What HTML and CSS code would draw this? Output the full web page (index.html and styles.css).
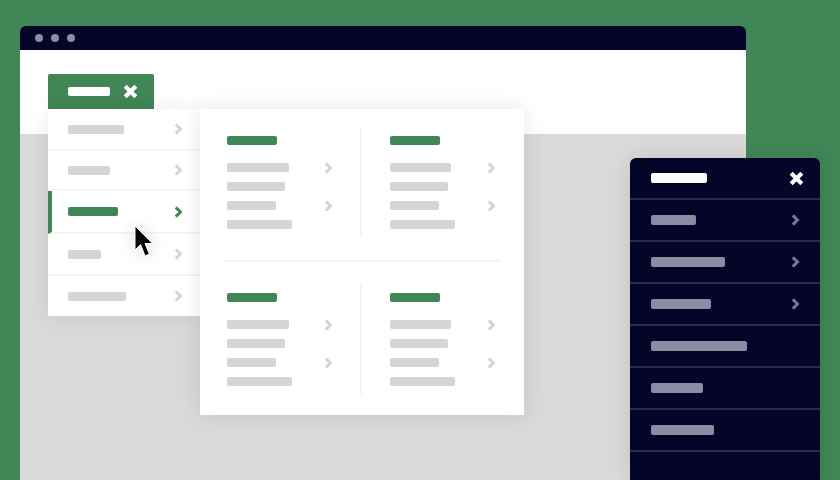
FILE: index.html
```html
<!DOCTYPE html>
<html lang="en">

<head>
    <meta charset="UTF-8">
    <meta name="viewport" content="width=device-width, initial-scale=1.0">
    <title>Navigation menus</title>
    <link rel="stylesheet" href="styles.css">
</head>

<body>
    <svg class="icon-defs" aria-hidden="true">
        <symbol id="chevron" viewBox="0 0 9 12">
            <path d="M1.8 1.4 L6.4 6 L1.8 10.6" fill="none" stroke="currentColor" stroke-width="3"></path>
        </symbol>
        <symbol id="cross" viewBox="0 0 15 15">
            <path d="M2.2 2.2 L12.8 12.8 M12.8 2.2 L2.2 12.8" fill="none" stroke="currentColor" stroke-width="4.2"></path>
        </symbol>
    </svg>

    <div class="page">
        <div class="browser">
            <div class="browser-bar">
                <span class="dot"></span>
                <span class="dot"></span>
                <span class="dot"></span>
            </div>
            <div class="browser-head"></div>
            <div class="browser-body"></div>
        </div>

        <!-- 桌面端下拉菜单 -->
        <div class="desktop-nav">
            <div class="nav-tab">
                <span class="bar bar-white" style="width:42px"></span>
                <svg class="icon-cross"><use href="#cross"></use></svg>
            </div>
            <div class="nav-drop">
                <ul class="nav-list">
                    <li class="nav-item item-1"><span class="bar" style="width:56px"></span><svg class="icon-chevron"><use href="#chevron"></use></svg></li>
                    <li class="nav-item item-2"><span class="bar" style="width:42px"></span><svg class="icon-chevron"><use href="#chevron"></use></svg></li>
                    <li class="nav-item item-3 active"><span class="bar" style="width:50px"></span><svg class="icon-chevron"><use href="#chevron"></use></svg></li>
                    <li class="nav-item item-4"><span class="bar" style="width:33px"></span><svg class="icon-chevron"><use href="#chevron"></use></svg></li>
                    <li class="nav-item item-5"><span class="bar" style="width:58px"></span><svg class="icon-chevron"><use href="#chevron"></use></svg></li>
                </ul>
                <div class="mega">
                    <div class="mega-row">
                        <div class="mega-col">
                            <span class="bar bar-green" style="width:50px"></span>
                            <div class="mega-line"><span class="bar" style="width:62px"></span><svg class="icon-chevron"><use href="#chevron"></use></svg></div>
                            <div class="mega-line"><span class="bar" style="width:58px"></span></div>
                            <div class="mega-line"><span class="bar" style="width:49px"></span><svg class="icon-chevron"><use href="#chevron"></use></svg></div>
                            <div class="mega-line"><span class="bar" style="width:65px"></span></div>
                        </div>
                        <div class="mega-col">
                            <span class="bar bar-green" style="width:50px"></span>
                            <div class="mega-line"><span class="bar" style="width:61px"></span><svg class="icon-chevron"><use href="#chevron"></use></svg></div>
                            <div class="mega-line"><span class="bar" style="width:58px"></span></div>
                            <div class="mega-line"><span class="bar" style="width:49px"></span><svg class="icon-chevron"><use href="#chevron"></use></svg></div>
                            <div class="mega-line"><span class="bar" style="width:65px"></span></div>
                        </div>
                    </div>
                    <div class="mega-divider"></div>
                    <div class="mega-row">
                        <div class="mega-col">
                            <span class="bar bar-green" style="width:50px"></span>
                            <div class="mega-line"><span class="bar" style="width:62px"></span><svg class="icon-chevron"><use href="#chevron"></use></svg></div>
                            <div class="mega-line"><span class="bar" style="width:58px"></span></div>
                            <div class="mega-line"><span class="bar" style="width:49px"></span><svg class="icon-chevron"><use href="#chevron"></use></svg></div>
                            <div class="mega-line"><span class="bar" style="width:65px"></span></div>
                        </div>
                        <div class="mega-col">
                            <span class="bar bar-green" style="width:50px"></span>
                            <div class="mega-line"><span class="bar" style="width:61px"></span><svg class="icon-chevron"><use href="#chevron"></use></svg></div>
                            <div class="mega-line"><span class="bar" style="width:58px"></span></div>
                            <div class="mega-line"><span class="bar" style="width:49px"></span><svg class="icon-chevron"><use href="#chevron"></use></svg></div>
                            <div class="mega-line"><span class="bar" style="width:65px"></span></div>
                        </div>
                    </div>
                </div>
            </div>
        </div>

        <!-- 鼠标指针 -->
        <svg class="cursor" viewBox="0 0 20 33">
            <path d="M1 1 L1 25 L6.6 19.6 L11 31 L15.4 29 L11 18.6 L18.6 18.4 Z" fill="#000" stroke="#fff" stroke-width="1"></path>
        </svg>

        <!-- 移动端菜单 -->
        <div class="mobile-nav">
            <div class="mobile-head">
                <span class="bar bar-white bar-tall" style="width:56px"></span>
                <svg class="icon-cross"><use href="#cross"></use></svg>
            </div>
            <div class="mobile-item"><span class="bar bar-dim bar-tall" style="width:45px"></span><svg class="icon-chevron"><use href="#chevron"></use></svg></div>
            <div class="mobile-item"><span class="bar bar-dim bar-tall" style="width:74px"></span><svg class="icon-chevron"><use href="#chevron"></use></svg></div>
            <div class="mobile-item"><span class="bar bar-dim bar-tall" style="width:60px"></span><svg class="icon-chevron"><use href="#chevron"></use></svg></div>
            <div class="mobile-item"><span class="bar bar-dim bar-tall" style="width:96px"></span></div>
            <div class="mobile-item"><span class="bar bar-dim bar-tall" style="width:52px"></span></div>
            <div class="mobile-item"><span class="bar bar-dim bar-tall" style="width:63px"></span></div>
        </div>
    </div>
</body>

</html>
```

FILE: styles.css
```css
html,
body,
ul,
li,
div {
    padding: 0px;
    margin: 0px;
}

html,
body {
    height: 100%;
    overflow: hidden;
}

ul {
    list-style: none;
}

.icon-defs {
    display: none;
}

.page {
    position: relative;
    display: flex;
    width: 840px;
    height: 480px;
    padding: 26px 94px 0px 20px;
    box-sizing: border-box;
    background: #408656;
    overflow: hidden;
}

.browser {
    display: flex;
    flex-direction: column;
    flex: 1;
    border-radius: 6px 6px 0px 0px;
    overflow: hidden;
}

.browser-bar {
    display: flex;
    align-items: center;
    gap: 8px;
    height: 24px;
    padding-left: 15px;
    background: #05052a;
}

.dot {
    width: 8px;
    height: 8px;
    border-radius: 50%;
    background: #8b8ba3;
}

.browser-head {
    height: 84px;
    background: #ffffff;
}

.browser-body {
    flex: 1;
    background: #dad8d8;
}

.bar {
    display: block;
    height: 9px;
    border-radius: 2px;
    background: #d5d5d1;
}

.bar-white {
    background: #ffffff;
}

.bar-green {
    background: #408656;
}

.bar-dim {
    background: #8b8ba3;
}

.bar-tall {
    height: 10px;
}

.icon-chevron {
    display: block;
    flex: none;
    width: 9px;
    height: 12px;
    color: #d5d5d8;
}

.icon-cross {
    display: block;
    flex: none;
    width: 15px;
    height: 15px;
    color: #ffffff;
}

/* 桌面端下拉菜单 */
.desktop-nav {
    position: absolute;
    left: 48px;
    top: 74px;
}

.nav-tab {
    display: flex;
    align-items: center;
    justify-content: space-between;
    width: 106px;
    height: 35px;
    padding: 0px 16px 0px 20px;
    box-sizing: border-box;
    background: #408656;
    border-radius: 2px 2px 0px 0px;
}

.nav-drop {
    display: flex;
    align-items: flex-start;
}

.nav-list {
    width: 152px;
    background: #ffffff;
    box-shadow: 0px 0px 20px rgba(0, 0, 0, 0.08);
}

.nav-item {
    display: flex;
    align-items: center;
    justify-content: space-between;
    padding: 0px 17px 0px 20px;
    box-sizing: border-box;
    border-bottom: 2px solid #f4f4f4;
}

.item-1 {
    height: 42px;
}

.item-2 {
    height: 40px;
}

.item-3 {
    height: 43px;
}

.item-4 {
    height: 42px;
}

.item-5 {
    height: 40px;
    border-bottom: 0px;
}

.nav-item.active {
    border-left: 4px solid #408656;
    padding-left: 16px;
}

.nav-item.active .bar {
    background: #408656;
}

.nav-item.active .icon-chevron {
    color: #408656;
}

.mega {
    position: relative;
    width: 324px;
    padding: 19px 23px 21px 23px;
    box-sizing: border-box;
    background: #ffffff;
    box-shadow: 0px 0px 20px rgba(0, 0, 0, 0.1);
}

.mega-row {
    display: grid;
    grid-template-columns: 139px 139px;
}

.mega-col {
    height: 109px;
    padding: 8px 5px 0px 28px;
    box-sizing: border-box;
}

.mega-col:first-child {
    padding: 8px 27px 0px 4px;
    border-right: 2px solid #f4f4f4;
}

.mega-line {
    display: flex;
    align-items: center;
    justify-content: space-between;
    height: 9px;
    margin-top: 10px;
}

.mega-col .bar-green + .mega-line {
    margin-top: 18px;
}

.mega-divider {
    height: 2px;
    margin: 23px 0px;
    background: #f4f4f4;
}

.cursor {
    position: absolute;
    left: 134px;
    top: 225px;
    width: 20px;
    height: 33px;
    filter: drop-shadow(0px 0px 8px rgba(0, 0, 0, 0.18));
}

/* 移动端菜单 */
.mobile-nav {
    position: absolute;
    left: 630px;
    top: 158px;
    bottom: 0px;
    width: 190px;
    background: #05052a;
    border-radius: 6px 6px 0px 0px;
    box-shadow: 0px 0px 20px rgba(0, 0, 0, 0.1);
}

.mobile-head,
.mobile-item {
    display: flex;
    align-items: center;
    justify-content: space-between;
    padding: 0px 20px 0px 21px;
    box-sizing: border-box;
    border-bottom: 2px solid #2c2c4a;
}

.mobile-head {
    height: 42px;
    padding-right: 16px;
}

.mobile-item {
    height: 42px;
}

.mobile-item .icon-chevron {
    color: #77778f;
}
```
